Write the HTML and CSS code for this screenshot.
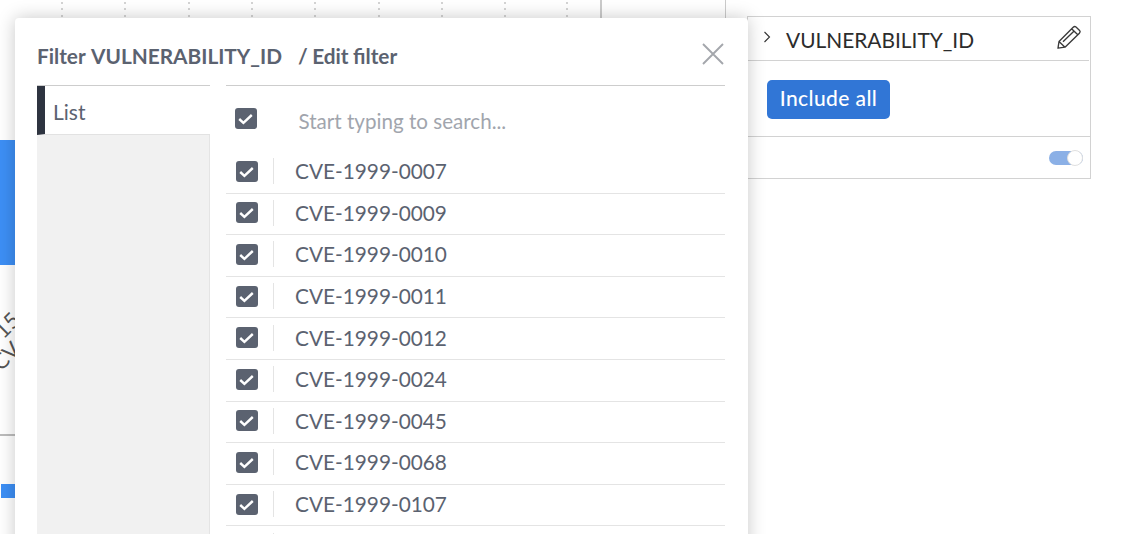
FILE: index.html
```html
<!DOCTYPE html>
<html lang="en">
<head>
<meta charset="utf-8">
<title>Edit filter</title>
<link rel="stylesheet" href="styles.css">
</head>
<body>
<div class="page">
  <div class="chart">
    <i class="grid-dot g1"></i><i class="grid-dot g2"></i><i class="grid-dot g3"></i><i class="grid-dot g4"></i><i class="grid-dot g5"></i><i class="grid-dot g6"></i><i class="grid-dot g7"></i><i class="grid-dot g8"></i><i class="grid-dot g9"></i>
    <i class="axis-v a1"></i><i class="axis-v a2"></i>
    <i class="bar-big"></i><i class="bar-small"></i><i class="axis-h"></i>
    <span class="tick t1">15</span><span class="tick t2">CV</span>
  </div>

  <aside class="panel">
    <div class="panel-head">
      <svg class="chev" viewBox="0 0 8 14" width="8" height="14"><path d="M1.5 2 L6.5 7 L1.5 12" fill="none" stroke="#333" stroke-width="1.1"/></svg>
      <span class="panel-title">VULNERABILITY_ID</span>
      <svg class="pencil" viewBox="0 0 26 26" width="26" height="26"><path d="M2 24.2 L3 17.5 L17.2 3.2 Q18.6 2 20 3 L23.6 6.4 Q24.8 7.8 23.4 9.2 L9 23.2 Z M3 17.5 L9 23.2 M15.6 4.8 L21.8 10.8 M7 17.8 L17.6 7.4" fill="none" stroke="#3a3a3a" stroke-width="1.35" stroke-linejoin="round"/></svg>
    </div>
    <div class="panel-body"><button class="include">Include all</button></div>
    <div class="panel-foot"><span class="toggle"><span class="knob"></span></span></div>
  </aside>

  <section class="modal">
    <header class="modal-head">
      <h2 class="modal-title">Filter VULNERABILITY_ID</h2>
      <span class="modal-sub">/ Edit filter</span>
      <svg class="close" viewBox="0 0 22 22" width="22" height="22"><path d="M1 1 L21 21 M21 1 L1 21" stroke="#a4a7ac" stroke-width="1.9" fill="none"/></svg>
    </header>
    <div class="modal-body">
      <nav class="side">
        <div class="side-tab">List</div>
        <div class="side-fill"></div>
      </nav>
      <div class="main">
        <div class="search">
          <span class="check"><svg viewBox="0 0 21 21" width="21" height="21"><path d="M4.2 11 L8.4 14.8 L16.8 7" fill="none" stroke="#fff" stroke-width="2.4"/></svg></span>
          <span class="placeholder">Start typing to search...</span>
        </div>
        <ul class="rows">
          <li class="row"><span class="check"><svg viewBox="0 0 21 21" width="21" height="21"><path d="M4.2 11 L8.4 14.8 L16.8 7" fill="none" stroke="#fff" stroke-width="2.4"/></svg></span><span class="cve">CVE-1999-0007</span></li>
          <li class="row"><span class="check"><svg viewBox="0 0 21 21" width="21" height="21"><path d="M4.2 11 L8.4 14.8 L16.8 7" fill="none" stroke="#fff" stroke-width="2.4"/></svg></span><span class="cve">CVE-1999-0009</span></li>
          <li class="row"><span class="check"><svg viewBox="0 0 21 21" width="21" height="21"><path d="M4.2 11 L8.4 14.8 L16.8 7" fill="none" stroke="#fff" stroke-width="2.4"/></svg></span><span class="cve">CVE-1999-0010</span></li>
          <li class="row"><span class="check"><svg viewBox="0 0 21 21" width="21" height="21"><path d="M4.2 11 L8.4 14.8 L16.8 7" fill="none" stroke="#fff" stroke-width="2.4"/></svg></span><span class="cve">CVE-1999-0011</span></li>
          <li class="row"><span class="check"><svg viewBox="0 0 21 21" width="21" height="21"><path d="M4.2 11 L8.4 14.8 L16.8 7" fill="none" stroke="#fff" stroke-width="2.4"/></svg></span><span class="cve">CVE-1999-0012</span></li>
          <li class="row"><span class="check"><svg viewBox="0 0 21 21" width="21" height="21"><path d="M4.2 11 L8.4 14.8 L16.8 7" fill="none" stroke="#fff" stroke-width="2.4"/></svg></span><span class="cve">CVE-1999-0024</span></li>
          <li class="row"><span class="check"><svg viewBox="0 0 21 21" width="21" height="21"><path d="M4.2 11 L8.4 14.8 L16.8 7" fill="none" stroke="#fff" stroke-width="2.4"/></svg></span><span class="cve">CVE-1999-0045</span></li>
          <li class="row"><span class="check"><svg viewBox="0 0 21 21" width="21" height="21"><path d="M4.2 11 L8.4 14.8 L16.8 7" fill="none" stroke="#fff" stroke-width="2.4"/></svg></span><span class="cve">CVE-1999-0068</span></li>
          <li class="row"><span class="check"><svg viewBox="0 0 21 21" width="21" height="21"><path d="M4.2 11 L8.4 14.8 L16.8 7" fill="none" stroke="#fff" stroke-width="2.4"/></svg></span><span class="cve">CVE-1999-0107</span></li>
          <li class="row row-stub"><span class="check"></span><span class="cve">&nbsp;</span></li>
        </ul>
      </div>
    </div>
  </section>
</div>
</body>
</html>
```

FILE: styles.css
```css
* { box-sizing: border-box; }
html, body { margin: 0; padding: 0; background: #fff; }
body { font-family: Lato, "Noto Sans", sans-serif; }

.page {
  position: relative;
  width: 1126px;
  height: 534px;
  overflow: hidden;
  padding: 16px 0 0 747px;
}

/* Chart behind the dialog */
.chart { position: absolute; inset: 0; }
.grid-dot {
  position: absolute;
  top: 2px;
  width: 2px;
  height: 16px;
  background: repeating-linear-gradient(to bottom, #d4d4d4 0 2px, transparent 2px 6.5px);
}
.g1 { left: 61px; }
.g2 { left: 124px; }
.g3 { left: 188px; }
.g4 { left: 251px; }
.g5 { left: 314px; }
.g6 { left: 378px; }
.g7 { left: 441px; }
.g8 { left: 504px; }
.g9 { left: 566px; }
.axis-v { position: absolute; top: 0; height: 18px; background: #cbcbcb; }
.a1 { left: 600px; width: 2px; }
.a2 { left: 725px; width: 1px; }
.bar-big { position: absolute; left: 0; top: 140px; width: 15px; height: 125px; background: #3d8ff5; }
.bar-small { position: absolute; left: 1px; top: 484px; width: 14px; height: 14px; background: #3d8ff5; }
.axis-h { position: absolute; left: 0; top: 434px; width: 15px; height: 2px; background: #bcbcbc; }
.tick {
  position: absolute;
  font-size: 22px;
  color: #555;
  transform: rotate(-45deg);
  line-height: 1;
}
.t1 { left: -6px; top: 314px; }
.t2 { left: -9px; top: 345px; }

/* Right panel */
.panel {
  position: relative;
  width: 344px;
  height: 163px;
  border: 1px solid #d2d2d2;
  display: flex;
  flex-direction: column;
}
.panel-head {
  height: 44px;
  flex: none;
  margin-right: 1px;
  border-bottom: 1px solid #d2d2d2;
  display: flex;
  align-items: center;
  padding: 0 7px 0 15px;
}
.chev { flex: none; margin-right: 15px; margin-top: -3px; }
.panel-title { flex: 1; font-size: 20.9px; color: #2c2c2c; line-height: 1; padding-top: 3px; }
.pencil { flex: none; margin-top: -3px; }
.panel-body {
  height: 76px;
  flex: none;
  border-bottom: 1px solid #d2d2d2;
  padding: 19px 0 0 19px;
}
.include {
  display: block;
  width: 123px;
  height: 39px;
  border: 0;
  border-radius: 5px;
  background: #3176d6;
  color: #fff;
  font: 500 21px Lato, sans-serif;
  letter-spacing: 0.4px;
  padding: 0 0 4px;
}
.panel-foot { flex: 1; display: flex; justify-content: flex-end; align-items: center; padding-right: 7px; }
.toggle {
  position: relative;
  display: block;
  width: 34px;
  height: 14px;
  border-radius: 7px;
  background: #8bb0e6;
}
.knob {
  position: absolute;
  right: 0;
  top: -1px;
  width: 16px;
  height: 16px;
  border-radius: 50%;
  background: #fff;
  border: 1px solid #e0e0e0;
}

/* Dialog */
.modal {
  position: absolute;
  left: 15px;
  top: 18px;
  width: 733px;
  height: 560px;
  background: #fff;
  border-radius: 4px;
  box-shadow: 0 0 18px rgba(0, 0, 0, 0.22);
  padding: 0 23px 0 22px;
  display: flex;
  flex-direction: column;
}
.modal-head {
  position: relative;
  height: 67px;
  flex: none;
  display: flex;
  align-items: center;
  padding: 9px 0 0;
  color: #5b6270;
}
.modal-title { margin: 0; font-size: 20.8px; font-weight: 700; line-height: 1; word-spacing: 1.5px; }
.modal-sub { margin-left: 16px; font-size: 20.8px; font-weight: 700; line-height: 1; word-spacing: -0.6px; }
.close { position: absolute; right: 1px; top: 25px; }
.modal-body { flex: 1; display: flex; gap: 16px; min-height: 0; }

.side { width: 173px; flex: none; display: flex; flex-direction: column; border-top: 1px solid #cdcdcd; }
.side-tab {
  height: 49px;
  flex: none;
  border-left: 8px solid #2e3440;
  border-bottom: 1px solid #e2e2e2;
  padding-left: 8px;
  font-size: 21px;
  line-height: 52px;
  color: #5b6270;
}
.side-fill { flex: 1; background: #f1f1f1; border-right: 1px solid #e4e4e4; }

.main { flex: 1; border-top: 1px solid #cdcdcd; }
.search { height: 66px; display: flex; align-items: center; padding: 0 0 1px 9px; }
.search .check { margin-right: 42px; }
.placeholder { font-size: 20.6px; color: #a1a5ad; line-height: 1; padding-top: 5px; }

.check {
  display: block;
  flex: none;
  width: 21.5px;
  height: 21px;
  border-radius: 3px;
  background: #5b6270;
}
.check svg { display: block; }

.rows { list-style: none; margin: 0; padding: 0; }
.row {
  height: 41.6px;
  display: flex;
  align-items: center;
  padding: 0 0 2px 10px;
  border-bottom: 1px solid #e4e4e4;
}
.row-stub { border-bottom: 0; }
.cve {
  margin-left: 15.5px;
  padding-left: 21px;
  border-left: 1px solid #e4e4e4;
  font-size: 20.8px;
  line-height: 26px;
  color: #5b6270;
}
```
